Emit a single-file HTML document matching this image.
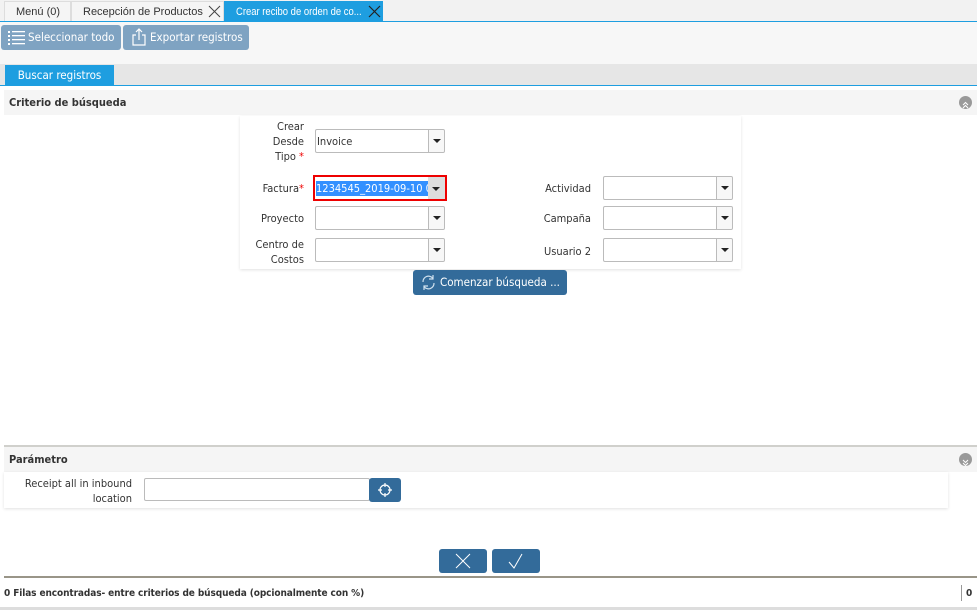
<!DOCTYPE html>
<html><head><meta charset="utf-8"><style>
*{box-sizing:border-box;margin:0;padding:0}
body{width:977px;height:610px;background:#fff;font-family:"DejaVu Sans Condensed","Liberation Sans",sans-serif;font-size:11px;color:#333;position:relative;overflow:hidden}
.a{position:absolute}
.tab{position:absolute;top:1px;height:20px;line-height:20px;font-family:"Liberation Sans",sans-serif;font-size:11px;color:#333;background:#f5f5f5;border:1px solid #ddd;border-bottom:none;padding-left:11px;white-space:nowrap;overflow:hidden}
.tab span{display:inline-block;white-space:nowrap}
.btn{position:absolute;background:#7fa3c2;color:#fff;border-radius:3px;font-size:11.5px;line-height:24px}
.lbl{position:absolute;text-align:right;font-size:11px;color:#333;line-height:15px}
.inp{position:absolute;height:24px;border:1px solid #bbb;background:#fff;border-radius:2px}
.inp .dd{position:absolute;right:0;top:0;width:16px;height:22px;border-left:1px solid #bbb;background:#f7f7f7;border-radius:0 2px 2px 0}
.inp .dd:after{content:"";position:absolute;left:4px;top:9px;border-left:4px solid transparent;border-right:4px solid transparent;border-top:4px solid #222}
.hdr{position:absolute;left:4px;right:0;height:25px;background:#f5f5f5;font-weight:bold;font-size:11px;line-height:25px;padding-left:5px;color:#333}
.circ{position:absolute;right:5px;top:6px;width:13px;height:13px;border-radius:50%;background:#999}
.dbtn{position:absolute;background:#336b9a;border-radius:3px}
</style></head><body>
<div class="a" style="left:0;top:0;width:977px;height:22px;background:#f2f2f2"></div>
<div class="tab" style="left:4px;width:67px">Menú (0)</div>
<div class="tab" style="left:71px;width:153px"><span>Recepción de Productos</span></div>
<svg class="a" style="left:208px;top:5px" width="13" height="13"><path d="M1 1L12 12M12 1L1 12" stroke="#444" stroke-width="1"/></svg>
<div class="tab" style="left:224px;width:159px;background:#1e9ee0;color:#fff;border-color:#1e9ee0"><span style="transform:scaleX(0.86);transform-origin:left">Crear recibo de orden de co...</span></div>
<svg class="a" style="left:368px;top:5px" width="13" height="13"><path d="M1 1L12 12M12 1L1 12" stroke="#222" stroke-width="1.2"/></svg>
<div class="a" style="left:0;top:21px;width:977px;height:1px;background:#1e9ee0"></div>
<div class="a" style="left:0;top:22px;width:977px;height:42px;background:#f7f7f7"></div>
<div class="btn" style="left:1px;top:25px;width:120px;height:25px;padding-left:27px">Seleccionar todo</div>
<svg class="a" style="left:8px;top:30px" width="18" height="15" fill="#fff"><rect x="0" y="1" width="2" height="2"/><rect x="0" y="5" width="2" height="2"/><rect x="0" y="9" width="2" height="2"/><rect x="0" y="13" width="2" height="2"/><rect x="4" y="1" width="13" height="1.3"/><rect x="4" y="5" width="13" height="1.3"/><rect x="4" y="9" width="13" height="1.3"/><rect x="4" y="13" width="13" height="1.3"/></svg>
<div class="btn" style="left:123px;top:25px;width:126px;height:25px;padding-left:27px">Exportar registros</div>
<svg class="a" style="left:132px;top:28px" width="14" height="18" fill="none" stroke="#fff" stroke-width="1.2"><path d="M4 7H1V17H13V7H10M7 12V1M4 4L7 1L10 4"/></svg>
<div class="a" style="left:0;top:64px;width:977px;height:21px;background:#e6e6e6"></div>
<div class="a" style="left:5px;top:65px;width:109px;height:20px;background:#1e9ee0;color:#fff;font-size:11.5px;line-height:20px;text-align:center">Buscar registros</div>
<div class="a" style="left:0;top:85px;width:977px;height:1px;background:#1e9ee0"></div>
<div class="hdr" style="top:90px">Criterio de búsqueda<div class="circ"><svg width="13" height="13" fill="none" stroke="#fff" stroke-width="1"><path d="M4 6L6.5 3.5L9 6M4 9L6.5 6.5L9 9"/></svg></div></div>
<div class="a" style="left:240px;top:116px;width:501px;height:153px;background:#fff;box-shadow:0 1px 3px rgba(0,0,0,.12)"></div>
<div class="lbl" style="left:240px;top:119px;width:64px">Crear<br>Desde<br>Tipo <span style="color:#e00">*</span></div>
<div class="inp" style="left:315px;top:129px;width:130px"><span style="position:absolute;left:1px;top:5px">Invoice</span><div class="dd"></div></div>
<div class="lbl" style="left:240px;top:181px;width:64px">Factura<span style="color:#e00">*</span></div>
<div class="a" style="left:313px;top:175px;width:134px;height:26px;border:2px solid #e00"></div>
<div class="a" style="left:316px;top:181px;width:112px;height:15px;background:#3390ff;color:#fff;line-height:15px;overflow:hidden;white-space:nowrap">1234545_2019-09-10 0</div>
<div class="a" style="left:428px;top:177px;width:17px;height:22px;background:#ddd"></div>
<div class="a" style="left:432px;top:187px;border-left:4px solid transparent;border-right:4px solid transparent;border-top:4px solid #222"></div>
<div class="lbl" style="left:240px;top:211px;width:64px">Proyecto</div>
<div class="inp" style="left:315px;top:206px;width:130px"><div class="dd"></div></div>
<div class="lbl" style="left:240px;top:237px;width:64px">Centro de<br>Costos</div>
<div class="inp" style="left:315px;top:238px;width:130px"><div class="dd"></div></div>
<div class="lbl" style="left:500px;top:181px;width:91px">Actividad</div>
<div class="inp" style="left:603px;top:176px;width:130px"><div class="dd"></div></div>
<div class="lbl" style="left:500px;top:211px;width:91px">Campaña</div>
<div class="inp" style="left:603px;top:206px;width:130px"><div class="dd"></div></div>
<div class="lbl" style="left:500px;top:244px;width:91px">Usuario 2</div>
<div class="inp" style="left:603px;top:238px;width:130px"><div class="dd"></div></div>
<div class="dbtn" style="left:413px;top:270px;width:154px;height:25px;color:#fff;font-size:11.5px;line-height:25px;padding-left:27px">Comenzar búsqueda ...</div>
<svg class="a" style="left:420px;top:274px" width="17" height="17" fill="none" stroke="#cfe0ee" stroke-width="1.2"><path d="M3 8A5.5 5.5 0 0 1 13 4.5M14 9A5.5 5.5 0 0 1 4 12.5M13 1V5H9M4 16V12H8"/></svg>
<div class="a" style="left:4px;top:445px;width:973px;height:2px;background:#d0d0cc"></div>
<div class="hdr" style="top:447px">Parámetro<div class="circ"><svg width="13" height="13" fill="none" stroke="#fff" stroke-width="1"><path d="M4 4L6.5 6.5L9 4M4 7L6.5 9.5L9 7"/></svg></div></div>
<div class="a" style="left:4px;top:472px;width:944px;height:36px;background:#fff;box-shadow:0 1px 3px rgba(0,0,0,.12)"></div>
<div class="lbl" style="left:4px;top:476px;width:128px">Receipt all in inbound<br>location</div>
<div class="inp" style="left:144px;top:478px;width:226px;height:23px"></div>
<div class="dbtn" style="left:369px;top:478px;width:32px;height:24px"></div>
<svg class="a" style="left:377px;top:482px" width="16" height="16" fill="none" stroke="#fff" stroke-width="1.2"><circle cx="8" cy="8" r="5"/><path d="M8 1V5M8 11V15M1 8H5M11 8H15"/></svg>
<div class="dbtn" style="left:439px;top:549px;width:48px;height:24px"></div>
<svg class="a" style="left:455px;top:553px" width="16" height="16"><path d="M1 1L15 15M15 1L1 15" stroke="#fff" stroke-width="1"/></svg>
<div class="dbtn" style="left:492px;top:549px;width:48px;height:24px"></div>
<svg class="a" style="left:507px;top:552px" width="18" height="18"><path d="M2 10L7 16L15 2" fill="none" stroke="#fff" stroke-width="1"/></svg>
<div class="a" style="left:4px;top:576px;width:973px;height:2px;background:#999588"></div>
<div class="a" style="left:4px;top:586px;font-size:10px;font-weight:bold;line-height:15px;letter-spacing:-0.1px">0 Filas encontradas- entre criterios de búsqueda (opcionalmente con %)</div>
<div class="a" style="left:961px;top:585px;width:1px;height:16px;background:#999"></div>
<div class="a" style="left:966px;top:586px;font-size:10px;font-weight:bold;line-height:15px">0</div>
<div class="a" style="left:0;top:607px;width:977px;height:3px;background:#ddd"></div>
</body></html>
